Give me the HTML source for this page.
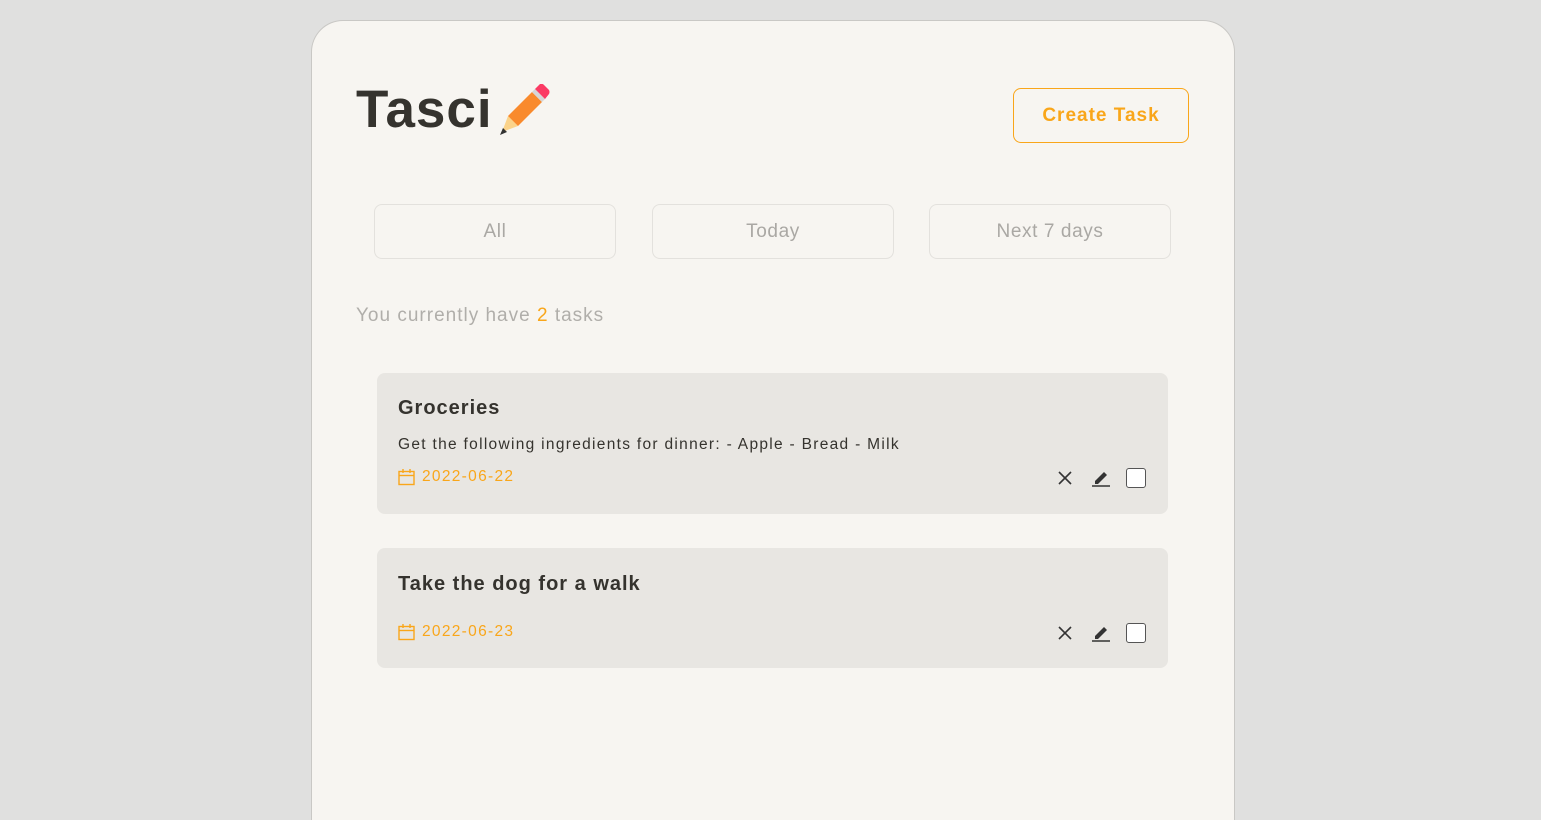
<!DOCTYPE html>
<html><head><style>
*{box-sizing:border-box;margin:0;padding:0}
body{width:1541px;height:801px;background:#e0e0df;font-family:"Liberation Sans",sans-serif;overflow:hidden;position:relative}
.card{position:absolute;left:311px;top:20px;width:924px;height:800px;background:#f7f5f1;border:1px solid #c9c8c5;border-bottom:none;border-radius:32px 32px 0 0}
.abs{position:absolute}
h1{position:absolute;left:44px;top:58px;font-size:53px;font-weight:bold;color:#35332e;letter-spacing:1px}
.create{left:701px;top:67px;width:176px;height:55px;border:1px solid #f9a61a;border-radius:8px;color:#f9a61a;font-size:19px;font-weight:bold;display:flex;align-items:center;justify-content:center;letter-spacing:1px}
.f{top:183px;width:242px;height:55px;border:1px solid #e3e1dd;border-radius:8px;color:#aaa8a4;font-size:19px;display:flex;align-items:center;justify-content:center;letter-spacing:.6px}
.count{left:44px;top:284px;font-size:19px;color:#b0aeaa;letter-spacing:1px}
.task{left:65px;width:791px;background:#e8e6e2;border-radius:8px}
.tt{position:absolute;left:21px;font-size:20px;font-weight:bold;color:#35332e;letter-spacing:1px}
.desc{position:absolute;left:21px;font-size:15.5px;color:#35332e;letter-spacing:1.3px}
.date{position:absolute;left:21px;font-size:15.5px;color:#f9a61a;display:flex;align-items:center;gap:7px;letter-spacing:1.3px}
.icons{position:absolute;right:22px;display:flex;align-items:center}
.cb{width:20px;height:20px;border:1.5px solid #555;border-radius:3px;background:#fff;margin-left:16px}
</style></head><body>
<div class="card">
<h1>Tasci</h1>
<svg class="abs" style="left:186px;top:63px" width="52" height="52" viewBox="0 0 52 52">
<polygon points="4,48 10,32 20,42" fill="#fbd38a"/>
<polygon points="2,51 5,44 9,48" fill="#333"/>
<polygon points="10,32 34,8 44,18 20,42" fill="#f98a2d"/>
<polygon points="34,8 37,5 47,15 44,18" fill="#d6d6d6"/>
<path d="M37,5 L42,0 Q44,-1 46,1 L51,6 Q52,8 51,10 L47,15 Z" fill="#fb3a64"/>
</svg>
<div class="abs create">Create Task</div>
<div class="abs f" style="left:62px">All</div>
<div class="abs f" style="left:340px">Today</div>
<div class="abs f" style="left:617px">Next 7 days</div>
<div class="abs count">You currently have <span style="color:#f9a61a">2</span> tasks</div>
<div class="abs task" style="top:352px;height:141px">
 <div class="tt" style="top:24px">Groceries</div>
 <div class="desc" style="top:63px">Get the following ingredients for dinner: - Apple - Bread - Milk</div>
 <div class="date" style="top:95px"><svg width="17" height="17" viewBox="0 0 17 17" fill="none" stroke="#f9a61a" stroke-width="1.4"><rect x="1" y="2.5" width="15" height="13"/><line x1="1" y1="6.5" x2="16" y2="6.5"/><line x1="5" y1="0" x2="5" y2="4"/><line x1="12" y1="0" x2="12" y2="4"/></svg>2022-06-22</div>
 <div class="icons" style="top:95px"><svg width="16" height="16" viewBox="0 0 16 16" stroke="#333" stroke-width="1.6"><line x1="2" y1="2" x2="14" y2="14"/><line x1="14" y1="2" x2="2" y2="14"/></svg><svg style="margin-left:19px" width="18" height="18" viewBox="0 0 18 18"><polygon points="3,12 12,3 15,6 6,15 3,15" fill="#333"/><line x1="0" y1="17" x2="18" y2="17" stroke="#333" stroke-width="1.6"/></svg><div class="cb"></div></div>
</div>
<div class="abs task" style="top:527px;height:120px">
 <div class="tt" style="top:25px">Take the dog for a walk</div>
 <div class="date" style="top:75px"><svg width="17" height="17" viewBox="0 0 17 17" fill="none" stroke="#f9a61a" stroke-width="1.4"><rect x="1" y="2.5" width="15" height="13"/><line x1="1" y1="6.5" x2="16" y2="6.5"/><line x1="5" y1="0" x2="5" y2="4"/><line x1="12" y1="0" x2="12" y2="4"/></svg>2022-06-23</div>
 <div class="icons" style="top:75px"><svg width="16" height="16" viewBox="0 0 16 16" stroke="#333" stroke-width="1.6"><line x1="2" y1="2" x2="14" y2="14"/><line x1="14" y1="2" x2="2" y2="14"/></svg><svg style="margin-left:19px" width="18" height="18" viewBox="0 0 18 18"><polygon points="3,12 12,3 15,6 6,15 3,15" fill="#333"/><line x1="0" y1="17" x2="18" y2="17" stroke="#333" stroke-width="1.6"/></svg><div class="cb"></div></div>
</div>
</div>
</body></html>
